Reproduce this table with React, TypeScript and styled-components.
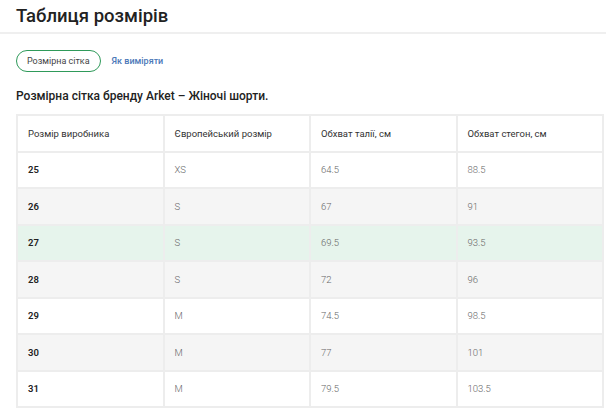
import React from "react";
import styled, { createGlobalStyle } from "styled-components";

const Global = createGlobalStyle`
  html, body { margin: 0; padding: 0; background: #fff; }
  body { font-family: Roboto, "Noto Sans", sans-serif; color: #222; }
`;

const Page = styled.div`
  width: 606px;
  height: 416px;
  overflow: hidden;
  background: #fff;
`;

const Header = styled.div`
  height: 32px;
  padding: 0 16px;
  display: flex;
  align-items: center;
  border-bottom: 2px solid #efefef;
`;

const Title = styled.h1`
  margin: 0;
  font-size: 18.5px;
  font-weight: 500;
  color: #222;
`;

const Body = styled.div`
  padding: 16px 2px 0 16px;
`;

const Tabs = styled.div`
  display: flex;
  align-items: center;
  gap: 11px;
`;

const Tab = styled.button<{ $active?: boolean }>`
  font-family: inherit;
  font-size: 9px;
  height: 22px;
  padding: 0 ${(p) => (p.$active ? "10px" : "0")};
  border-radius: 11px;
  border: ${(p) => (p.$active ? "1.5px solid #2f9a5a" : "none")};
  background: transparent;
  color: ${(p) => (p.$active ? "#444" : "#4b78b8")};
  font-weight: ${(p) => (p.$active ? 400 : 500)};
  cursor: pointer;
`;

const Subtitle = styled.h2`
  margin: 17px 0 0;
  font-size: 12px;
  font-weight: 500;
  color: #222;
`;

const Table = styled.table`
  margin-top: 11px;
  width: 588px;
  border-collapse: collapse;
  table-layout: fixed;
`;

const Row = styled.tr<{ $tone: "white" | "gray" | "green" }>`
  height: 36.5px;
  background: ${(p) =>
    p.$tone === "green" ? "#e6f4ec" : p.$tone === "gray" ? "#f5f5f5" : "#fff"};
`;

const HeadCell = styled.th`
  border: 2px solid #ededed;
  text-align: left;
  font-size: 9.5px;
  font-weight: 400;
  color: #333;
  padding: 0 10px;
`;

const Cell = styled.td<{ $strong?: boolean }>`
  border: 2px solid #ededed;
  font-size: 9.5px;
  padding: 0 10px;
  color: ${(p) => (p.$strong ? "#222" : "#666")};
  font-weight: ${(p) => (p.$strong ? 600 : 300)};
`;

const rows = [
  ["25", "XS", "64.5", "88.5"],
  ["26", "S", "67", "91"],
  ["27", "S", "69.5", "93.5"],
  ["28", "S", "72", "96"],
  ["29", "M", "74.5", "98.5"],
  ["30", "M", "77", "101"],
  ["31", "M", "79.5", "103.5"],
];

export default function App() {
  return (
    <Page>
      <Global />
      <Header>
        <Title>Таблиця розмірів</Title>
      </Header>
      <Body>
        <Tabs>
          <Tab $active>Розмірна сітка</Tab>
          <Tab>Як виміряти</Tab>
        </Tabs>
        <Subtitle>Розмірна сітка бренду Arket – Жіночі шорти.</Subtitle>
        <Table>
          <thead>
            <Row $tone="white">
              <HeadCell>Розмір виробника</HeadCell>
              <HeadCell>Європейський розмір</HeadCell>
              <HeadCell>Обхват талії, см</HeadCell>
              <HeadCell>Обхват стегон, см</HeadCell>
            </Row>
          </thead>
          <tbody>
            {rows.map((r, i) => (
              <Row
                key={r[0]}
                $tone={r[0] === "27" ? "green" : i % 2 === 1 ? "gray" : "white"}
              >
                <Cell $strong>{r[0]}</Cell>
                <Cell>{r[1]}</Cell>
                <Cell>{r[2]}</Cell>
                <Cell>{r[3]}</Cell>
              </Row>
            ))}
          </tbody>
        </Table>
      </Body>
    </Page>
  );
}
